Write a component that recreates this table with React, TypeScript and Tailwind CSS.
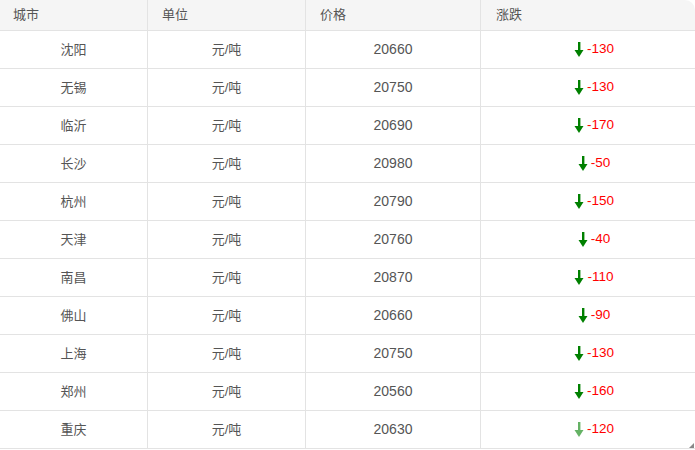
import React from "react";

const rows: [string, string, string][] = [
  ["沈阳", "20660", "-130"],
  ["无锡", "20750", "-130"],
  ["临沂", "20690", "-170"],
  ["长沙", "20980", "-50"],
  ["杭州", "20790", "-150"],
  ["天津", "20760", "-40"],
  ["南昌", "20870", "-110"],
  ["佛山", "20660", "-90"],
  ["上海", "20750", "-130"],
  ["郑州", "20560", "-160"],
  ["重庆", "20630", "-120"],
];

function Arrow({ faded }: { faded?: boolean }) {
  return (
    <svg width="10" height="16" viewBox="0 0 10 16" className={faded ? "opacity-60" : ""}>
      <rect x="4" y="0" width="2.4" height="10" fill="#008000" />
      <polygon points="0.5,8 9.5,8 5,15" fill="#008000" />
    </svg>
  );
}

export default function App() {
  const font = { fontFamily: '"Liberation Sans", "Noto Sans CJK SC", Arial, sans-serif' };
  return (
    <div className="w-[695px] h-[450px] bg-white relative" style={font}>
      <div className="grid grid-cols-[147px_158px_175px_215px] text-[13px] text-[#555]">
        <div className="h-[31px] bg-[#f5f5f5] border-b border-[#e3e3e3] flex items-center pl-[13px]">城市</div>
        <div className="h-[31px] bg-[#f5f5f5] border-b border-l border-[#e3e3e3] flex items-center pl-[14px]">单位</div>
        <div className="h-[31px] bg-[#f5f5f5] border-b border-l border-[#e3e3e3] flex items-center pl-[14px]">价格</div>
        <div className="h-[31px] bg-[#f5f5f5] border-b border-l border-[#e3e3e3] rounded-tr-[10px] flex items-center pl-[15px]">涨跌</div>
        {rows.map(([city, price, chg], i) => (
          <React.Fragment key={i}>
            <div className="h-[38px] border-b border-[#e3e3e3] flex items-center justify-center">{city}</div>
            <div className="h-[38px] border-b border-l border-[#e3e3e3] flex items-center justify-center">元/吨</div>
            <div className="h-[38px] border-b border-l border-[#e3e3e3] flex items-center justify-center text-[14px]">{price}</div>
            <div className="h-[38px] border-b border-l border-[#e3e3e3] flex items-center justify-center gap-[3px] pl-[12px] text-[#ff0000] text-[13.5px]">
              <Arrow faded={i === rows.length - 1} />
              <span>{chg}</span>
            </div>
          </React.Fragment>
        ))}
      </div>
      <svg className="absolute right-[1px] bottom-[2px]" width="5" height="5" viewBox="0 0 5 5">
        <polygon points="5,0 5,5 0,5" fill="#888" />
      </svg>
    </div>
  );
}
